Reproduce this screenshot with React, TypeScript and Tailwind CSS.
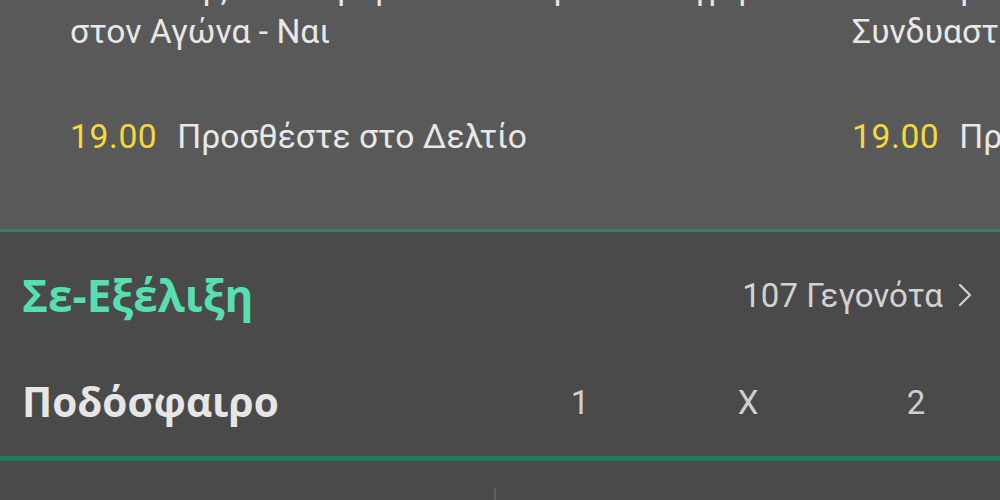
import React from "react";

const Card = ({ line1, line2 }: { line1: string; line2: string }) => (
  <div className="w-[782px] shrink-0 pl-[70px] whitespace-nowrap">
    <div className="-mt-[44px] text-[33.6px] leading-[44px] text-[#e8e8e8]">{line1}</div>
    <div className="text-[33.6px] leading-[44px] text-[#e8e8e8]">{line2}</div>
    <div className="mt-[61px] flex text-[33.6px] leading-[44px]">
      <span className="text-[#f3d93c] tracking-[0.6px]">19.00</span>
      <span className="ml-[20px] text-[#e8e8e8]">Προσθέστε στο Δελτίο</span>
    </div>
  </div>
);

export default function App() {
  return (
    <div
      className="w-[1000px] h-[500px] overflow-hidden bg-[#4a4a4a] flex flex-col"
      style={{ fontFamily: "Roboto, 'Noto Sans', sans-serif" }}
    >
      <div className="h-[229px] shrink-0 bg-[#595959] overflow-hidden pt-[10px] flex">
        <Card line1="Ο Παίκτης να Σκοράρει Οποιαδήποτε Στιγμή" line2="στον Αγώνα - Ναι" />
        <Card line1="Να Σκοράρουν και οι Δύο Ομάδες" line2="Συνδυαστικό Στοίχημα" />
      </div>
      <div className="h-[3px] shrink-0 bg-[#3f7d69]" />
      <div className="h-[126px] shrink-0 flex items-center justify-between pl-[22px] pr-[28px]">
        <span
          className="text-[44px] leading-none font-bold text-[#57dfb1]"
          style={{ fontFamily: "'Open Sans', 'Noto Sans', sans-serif" }}
        >
          Σε-Εξέλιξη
        </span>
        <div className="flex items-center text-[33px] leading-none text-[#d2d2d2]">
          <span>107 Γεγονότα</span>
          <svg className="ml-[15px]" width="14" height="24" viewBox="0 0 14 24" fill="none">
            <polyline points="2,2 12,12 2,22" stroke="#d2d2d2" strokeWidth="2.2" strokeLinecap="round" strokeLinejoin="round" />
          </svg>
        </div>
      </div>
      <div className="h-[98px] shrink-0 pb-[10px] flex items-center">
        <span
          className="flex-1 pl-[22px] text-[40.5px] leading-none font-bold text-[#e6e6e6]"
          style={{ fontFamily: "'Open Sans', 'Noto Sans', sans-serif" }}
        >
          Ποδόσφαιρο
        </span>
        <span className="w-[168px] text-center text-[33px] leading-none text-[#d0d0d0]">1</span>
        <span className="w-[168px] text-center text-[33px] leading-none text-[#d0d0d0]">X</span>
        <span className="w-[168px] text-center text-[33px] leading-none text-[#d0d0d0]">2</span>
      </div>
      <div className="h-[5px] shrink-0 bg-[#1e7a5b]" />
      <div className="flex-1 pt-[27px] pl-[494px]">
        <div className="w-[2px] h-[12px] bg-[#5e5e5e]" />
      </div>
    </div>
  );
}
